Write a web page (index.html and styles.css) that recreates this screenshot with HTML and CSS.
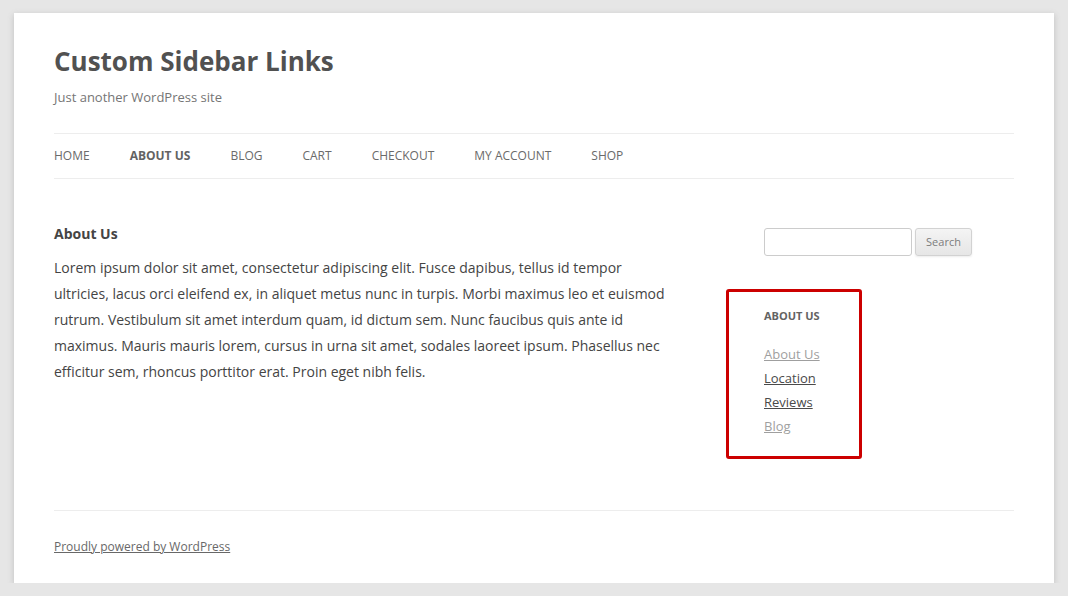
FILE: index.html
```html
<!DOCTYPE html>
<html lang="en">
<head>
<meta charset="utf-8">
<title>Custom Sidebar Links</title>
<link rel="stylesheet" href="styles.css">
</head>
<body>
<div class="site">
  <header class="site-header">
    <h1 class="site-title">Custom Sidebar Links</h1>
    <h2 class="site-description">Just another WordPress site</h2>
    <nav class="main-nav">
      <ul class="menu">
        <li><a href="#">Home</a></li>
        <li class="current"><a href="#">About Us</a></li>
        <li><a href="#">Blog</a></li>
        <li><a href="#">Cart</a></li>
        <li><a href="#">Checkout</a></li>
        <li><a href="#">My Account</a></li>
        <li><a href="#">Shop</a></li>
      </ul>
    </nav>
  </header>
  <div class="main">
    <article class="content">
      <h1 class="entry-title">About Us</h1>
      <p class="entry-text">Lorem ipsum dolor sit amet, consectetur adipiscing elit. Fusce dapibus, tellus id tempor ultricies, lacus orci eleifend ex, in aliquet metus nunc in turpis. Morbi maximus leo et euismod rutrum. Vestibulum sit amet interdum quam, id dictum sem. Nunc faucibus quis ante id maximus. Mauris mauris lorem, cursus in urna sit amet, sodales laoreet ipsum. Phasellus nec efficitur sem, rhoncus porttitor erat. Proin eget nibh felis.</p>
    </article>
    <aside class="sidebar">
      <form class="search-form">
        <input class="search-input" type="text">
        <button class="search-button" type="button">Search</button>
      </form>
      <section class="widget">
        <h3 class="widget-title">About Us</h3>
        <ul class="widget-links">
          <li><a class="visited" href="#">About Us</a></li>
          <li><a href="#">Location</a></li>
          <li><a href="#">Reviews</a></li>
          <li><a class="visited" href="#">Blog</a></li>
        </ul>
      </section>
    </aside>
  </div>
  <footer class="site-footer">
    <a href="#">Proudly powered by WordPress</a>
  </footer>
</div>
</body>
</html>
```
FILE: styles.css
```css
html, body {
  margin: 0;
  padding: 0;
}
body {
  background: #e6e6e6;
  font-family: "Open Sans", "Liberation Sans", sans-serif;
  color: #444;
}
.site {
  width: 960px;
  margin: 13px auto 0;
  padding: 0 40px;
  background: #fff;
  box-shadow: 0 2px 6px rgba(100, 100, 100, 0.3);
}
.site-header {
  padding-top: 24px;
}
.site-title {
  margin: 0;
  font-size: 26px;
  line-height: 48px;
  font-weight: 700;
  color: #515151;
}
.site-description {
  margin: 0;
  font-size: 13px;
  line-height: 24px;
  font-weight: 400;
  color: #757575;
}
.main-nav {
  margin-top: 24px;
  border-top: 1px solid #ededed;
  border-bottom: 1px solid #ededed;
}
.menu {
  list-style: none;
  margin: 0;
  padding: 0;
  display: flex;
  gap: 40px;
}
.menu a {
  display: block;
  font-size: 12px;
  line-height: 44px;
  text-transform: uppercase;
  color: #6a6a6a;
  text-decoration: none;
}
.menu .current a {
  font-weight: 700;
  color: #636363;
}
.main {
  display: flex;
  justify-content: space-between;
  align-items: flex-start;
  padding: 44px 0 51px;
}
.content {
  width: 625px;
}
.entry-title {
  margin: 0 0 10px;
  font-size: 14px;
  line-height: 22px;
  font-weight: 700;
  color: #444;
}
.entry-text {
  margin: 0;
  font-size: 14px;
  line-height: 26px;
  color: #444;
}
.sidebar {
  width: 250px;
  padding-top: 5px;
}
.search-form {
  display: flex;
  gap: 3px;
}
.search-input {
  box-sizing: border-box;
  width: 148px;
  height: 28px;
  margin: 0;
  border: 1px solid #ccc;
  border-radius: 3px;
  background: #fff;
  font-family: inherit;
}
.search-button {
  box-sizing: border-box;
  width: 57px;
  height: 28px;
  margin: 0;
  padding: 0 0 1px;
  border: 1px solid #d2d2d2;
  border-radius: 3px;
  background: linear-gradient(to bottom, #f4f4f4, #e6e6e6);
  box-shadow: 0 1px 2px rgba(64, 64, 64, 0.1);
  font-family: inherit;
  font-size: 11px;
  color: #7c7c7c;
}
.widget {
  box-sizing: border-box;
  width: 136px;
  margin: 33px 0 0 -38px;
  padding: 13px 0 18px 35px;
  border: 3px solid #cc0000;
  border-radius: 3px;
}
.widget-title {
  margin: 0 0 15px;
  font-size: 11px;
  line-height: 22px;
  font-weight: 700;
  text-transform: uppercase;
  color: #636363;
}
.widget-links {
  list-style: none;
  margin: 0;
  padding: 0;
}
.widget-links a {
  font-size: 13px;
  line-height: 24px;
  color: #4a4a4a;
  text-decoration: underline;
}
.widget-links a.visited {
  color: #9f9f9f;
}
.site-footer {
  border-top: 1px solid #ededed;
  padding: 24px 0 24px;
  line-height: 24px;
  font-size: 12px;
}
.site-footer a {
  font-size: 12px;
  color: #686868;
  text-decoration: underline;
}
```
